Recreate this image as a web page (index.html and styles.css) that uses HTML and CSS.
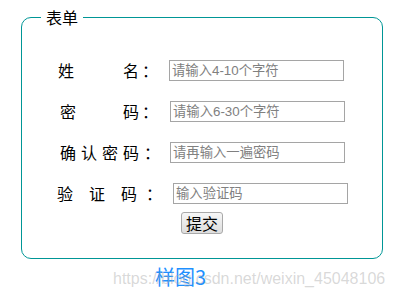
FILE: index.html
```html
<!DOCTYPE html>
<html lang="zh">
<head>
<meta charset="utf-8">
<link rel="stylesheet" href="styles.css">
</head>
<body>
<fieldset class="box">
  <legend class="title">表单</legend>
  <div class="row r1">
    <span class="ch">姓</span><span class="ch g49">名</span><span class="ch g3">：</span>
    <input class="field m11" type="text" placeholder="请输入4-10个字符">
  </div>
  <div class="row r2">
    <span class="ch">密</span><span class="ch g47">码</span><span class="ch g3">：</span>
    <input class="field m12" type="password" placeholder="请输入6-30个字符">
  </div>
  <div class="row r3">
    <span class="ch">确</span><span class="ch g5">认</span><span class="ch g5">密</span><span class="ch g5">码</span><span class="ch g5">：</span>
    <input class="field m10" type="password" placeholder="请再输入一遍密码">
  </div>
  <div class="row r4">
    <span class="ch">验</span><span class="ch g16">证</span><span class="ch g16">码</span><span class="ch g9">：</span>
    <input class="field m11" type="text" placeholder="输入验证码">
  </div>
  <div class="actions">
    <button class="submit" type="button">提交</button>
  </div>
</fieldset>
<div class="caption">样图3</div>
<div class="watermark">https://blog.csdn.net/weixin_45048106</div>
</body>
</html>
```
FILE: styles.css
```css
html, body {
  margin: 0;
  padding: 0;
  background: #fff;
}
body {
  position: relative;
  width: 394px;
  height: 299px;
  overflow: hidden;
  font-family: "Noto Sans CJK SC", "Liberation Sans", sans-serif;
  color: #000;
}
.box {
  box-sizing: border-box;
  width: 362px;
  margin: 9px 0 0 21px;
  padding: 35px 0 24px 0;
  border: 1px solid #009696;
  border-radius: 10px;
}
.title {
  margin-left: 19px;
  padding: 0 5px;
  font-size: 16px;
  line-height: 16px;
}
.row {
  display: flex;
  align-items: center;
  height: 21px;
  margin-bottom: 20px;
  font-size: 16px;
  line-height: 21px;
}
.r1 { padding-left: 36px; }
.r2 { padding-left: 38px; }
.r3 { padding-left: 38px; }
.r4 { padding-left: 35px; margin-bottom: 8px; }
.ch {
  display: inline-block;
  width: 16px;
  text-align: center;
}
.g3 { margin-left: 3px; }
.g5 { margin-left: 5px; }
.g9 { margin-left: 9px; }
.g16 { margin-left: 16px; }
.g47 { margin-left: 47px; }
.g49 { margin-left: 49px; }
.m10 { margin-left: 10px; }
.m11 { margin-left: 11px; }
.m12 { margin-left: 12px; }
.field {
  box-sizing: border-box;
  width: 175px;
  height: 21px;
  padding: 1px 2px;
  border: 1px solid #a5a5a5;
  border-radius: 0;
  font-family: "Liberation Sans", "Noto Sans CJK SC", sans-serif;
  font-size: 13.33px;
  outline: none;
}
.field::placeholder {
  color: #808080;
}
.actions {
  display: flex;
  justify-content: center;
}
.submit {
  box-sizing: border-box;
  height: 22px;
  padding: 0 4px;
  border: 1px solid #a9a9a9;
  border-radius: 3px;
  background: linear-gradient(#f7f7f7, #dddddd);
  font-family: "Noto Sans CJK SC", sans-serif;
  font-size: 16px;
  line-height: 20px;
  color: #000;
}
.caption {
  margin: 6px 0 0 155px;
  font-family: "Noto Sans CJK SC", "Liberation Sans", sans-serif;
  font-size: 20px;
  line-height: 24px;
  color: #1e90ff;
}
.watermark {
  position: absolute;
  left: 113px;
  top: 271px;
  font-family: "Liberation Sans", sans-serif;
  font-size: 16px;
  line-height: 16px;
  color: rgba(170, 170, 170, 0.45);
  white-space: nowrap;
}
```
